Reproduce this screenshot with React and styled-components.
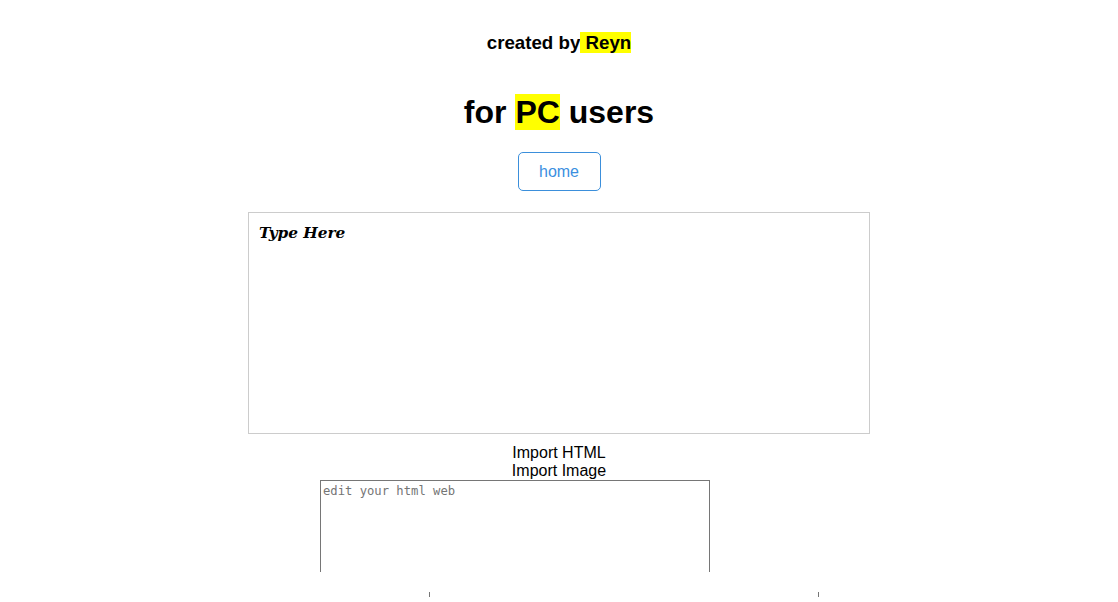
import React from "react";
import styled, { createGlobalStyle } from "styled-components";

const GlobalStyle = createGlobalStyle`
  html, body {
    margin: 0;
    padding: 0;
    background: #ffffff;
    overflow: hidden;
  }
  body {
    font-family: "Liberation Sans", Arial, sans-serif;
    color: #000000;
  }
`;

const Page = styled.div`
  display: flex;
  flex-direction: column;
  align-items: center;
  padding-top: 32px;
  height: 602px;
  box-sizing: border-box;
  overflow: hidden;
`;

const Credit = styled.h3`
  margin: 0;
  font-size: 18.72px;
  font-weight: bold;
  line-height: normal;
`;

const Highlight = styled.span`
  background: #ffff00;
`;

const Title = styled.h1`
  margin: 39.5px 0 0;
  font-size: 32px;
  font-weight: bold;
  line-height: normal;
`;

const HomeButton = styled.button`
  margin-top: 21.5px;
  width: 83px;
  height: 39px;
  box-sizing: border-box;
  border: 1px solid #3b8fdb;
  border-radius: 5px;
  background: #ffffff;
  color: #3b8fdf;
  font-family: "Liberation Sans", Arial, sans-serif;
  font-size: 16px;
  padding: 0;
  cursor: pointer;
`;

const Workspace = styled.div`
  margin-top: 21px;
  width: 622px;
  display: flex;
  flex-direction: column;
`;

const Editor = styled.div`
  width: 100%;
  height: 222px;
  box-sizing: border-box;
  border: 1px solid #cccccc;
  padding: 11px 10px 9px;
  outline: none;
`;

const Prompt = styled.span`
  font-family: "DejaVu Serif", "Liberation Serif", serif;
  font-weight: bold;
  font-style: italic;
  font-size: 15.3px;
`;

const ImportLinks = styled.div`
  margin-top: 10px;
  display: flex;
  flex-direction: column;
  align-items: center;
  font-size: 16px;
  line-height: 18px;
`;

const ImportLabel = styled.label`
  display: block;
  cursor: pointer;
`;

const CodeClip = styled.div`
  height: 92px;
  overflow: hidden;
  padding-left: ${(p) => p.$offset}px;
`;

const CodeArea = styled.textarea`
  display: block;
  width: 390px;
  height: 200px;
  box-sizing: border-box;
  border: 1px solid #767676;
  padding: 3px 2px 2px;
  margin: 0;
  font-family: "DejaVu Sans Mono", "Liberation Mono", monospace;
  font-size: 12.2px;
  line-height: 1.2;
  resize: none;
  outline: none;
  &::placeholder {
    color: #757575;
  }
`;

const Preview = styled.div`
  margin-top: 20px;
  margin-left: ${(p) => p.$offset}px;
  width: 390px;
  height: 5px;
  box-sizing: border-box;
  border-left: 1px solid #767676;
  border-right: 1px solid #767676;
`;

export default function App() {
  return (
    <>
      <GlobalStyle />
      <Page>
        <Credit>
          created by<Highlight> Reyn</Highlight>
        </Credit>
        <Title>
          for <Highlight>PC</Highlight> users
        </Title>
        <HomeButton>home</HomeButton>
        <Workspace>
          <Editor contentEditable suppressContentEditableWarning>
            <Prompt>Type Here</Prompt>
          </Editor>
          <ImportLinks>
            <ImportLabel>Import HTML</ImportLabel>
            <ImportLabel>Import Image</ImportLabel>
          </ImportLinks>
          <CodeClip $offset={72}>
            <CodeArea placeholder="edit your html web" />
          </CodeClip>
          <Preview $offset={181} />
        </Workspace>
      </Page>
    </>
  );
}
